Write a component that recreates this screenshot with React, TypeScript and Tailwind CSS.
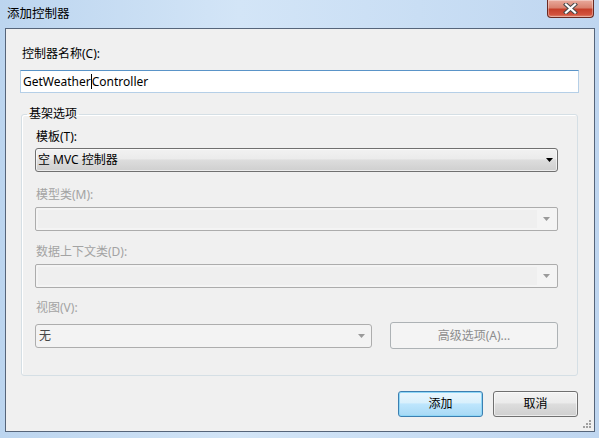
import React from "react";

const font = "font-['Noto_Sans','Noto_Sans_CJK_SC',sans-serif]";

const Arrow: React.FC<{ color: string }> = ({ color }) => (
  <svg width="7" height="4" viewBox="0 0 7 4">
    <path d="M0 0H7L3.5 4Z" fill={color} />
  </svg>
);

const CloseButton: React.FC = () => (
  <div className="w-[47px] h-[18px] rounded-b-[4px] border border-t-0 border-[#6a2a22] bg-[linear-gradient(to_bottom,#e9aa9c_0%,#d9826f_45%,#c6402a_55%,#d2513c_85%,#e08a72_100%)] flex items-center justify-center shadow-[inset_0_0_0_1px_rgba(255,255,255,0.35)]">
    <svg width="15" height="11" viewBox="0 0 15 11">
      <path d="M3 1.5L12 9.5M12 1.5L3 9.5" stroke="#4a4a4a" strokeWidth="4.2" strokeLinecap="square" />
      <path d="M3 1.5L12 9.5M12 1.5L3 9.5" stroke="#ffffff" strokeWidth="2.2" strokeLinecap="square" />
    </svg>
  </div>
);

const DisabledCombo: React.FC = () => (
  <div className="h-[24px] rounded-[2px] border border-[#acacac] bg-[#f4f4f4] flex p-[2px]">
    <div className="flex-1 bg-[#efefef]" />
    <div className="w-[18px] flex items-center justify-center">
      <Arrow color="#9a9a9a" />
    </div>
  </div>
);

export default function App() {
  return (
    <div
      className={`w-[599px] h-[438px] overflow-hidden flex flex-col bg-[linear-gradient(to_right,#bcd5ef,#d3e5f7_40%,#c9def4_70%,#bfd6f0)] text-[12px] leading-[16px] text-black ${font}`}
    >
      <div className="h-[28px] flex items-start justify-between shrink-0">
        <span className="pl-[7px] pt-[6px] text-[12.5px] leading-[16px] text-black">添加控制器</span>
        <div className="mr-[5px]">
          <CloseButton />
        </div>
      </div>

      <div className="relative ml-[5px] w-[590px] h-[404px] border border-[#56657a] bg-[#f0f0f0] flex flex-col pl-[14px] pr-[15px]">
        <label className="pt-[17px] pl-[2px] leading-[16px]">控制器名称(C):</label>
        <div className="mt-[8px] h-[23px] border border-[#5a94c8] border-l-[#b5cfe7] border-r-[#b5cfe7] border-b-[#b5cfe7] bg-white flex items-center pl-[2px]">
          <span>GetWeather</span>
          <span className="inline-block w-px h-[15px] bg-black" />
          <span>Controller</span>
        </div>

        <fieldset className="mt-[13px] ml-[1px] mr-[1px] h-[270px] border border-[#d5dfe5] rounded-[3px] shadow-[inset_1px_1px_0_#ffffff] pl-[13px] pr-[19px] flex flex-col">
          <legend className="-ml-[8px] px-[2px] leading-[16px]">基架选项</legend>

          <label className="pt-[7px] pl-[1px]">模板(T):</label>
          <div className="mt-[3px] h-[24px] rounded-[3px] border border-[#707070] bg-[linear-gradient(to_bottom,#f2f2f2_0%,#ebebeb_45%,#dddddd_50%,#cfcfcf_100%)] flex items-center justify-between pl-[2px] pr-[4px] shadow-[inset_0_0_0_1px_rgba(255,255,255,0.6)]">
            <span>空 MVC 控制器</span>
            <Arrow color="#000000" />
          </div>

          <label className="mt-[15px] pl-[1px] text-[#a3a3a3]">模型类(M):</label>
          <div className="mt-[4px]">
            <DisabledCombo />
          </div>

          <label className="mt-[13px] pl-[1px] text-[#a3a3a3]">数据上下文类(D):</label>
          <div className="mt-[4px]">
            <DisabledCombo />
          </div>

          <label className="mt-[12px] pl-[1px] text-[#a3a3a3]">视图(V):</label>
          <div className="mt-[6px] flex items-center">
            <div className="w-[337px] h-[24px] rounded-[3px] border border-[#adadad] bg-[#f3f3f3] flex items-center justify-between pl-[3px] pr-[6px]">
              <span className="text-[#474747]">无</span>
              <Arrow color="#9a9a9a" />
            </div>
            <div className="ml-[18px] flex-1 h-[27px] rounded-[3px] border border-[#adb2b5] bg-[#f4f4f4] flex items-center justify-center text-[#8d8d8d]">
              高级选项(A)...
            </div>
          </div>
        </fieldset>

        <div className="mt-[15px] flex justify-end gap-[10px] pr-[1px]">
          <button className="w-[85px] h-[26px] rounded-[3px] border border-[#3c7fb1] bg-[linear-gradient(to_bottom,#eaf6fd_0%,#d9f0fc_45%,#bee6fd_50%,#a7d9f5_100%)] shadow-[inset_0_0_0_1px_#8fd7f7] flex items-center justify-center">
            添加
          </button>
          <button className="w-[85px] h-[26px] rounded-[3px] border border-[#707070] bg-[linear-gradient(to_bottom,#f2f2f2_0%,#ebebeb_45%,#dddddd_50%,#cfcfcf_100%)] shadow-[inset_0_0_0_1px_rgba(255,255,255,0.6)] flex items-center justify-center">
            取消
          </button>
        </div>

        <svg className="absolute right-[2px] bottom-[2px]" width="9" height="9" viewBox="0 0 9 9">
          <g fill="#a0a0a0">
            <rect x="6" y="0" width="2" height="2" />
            <rect x="3" y="3" width="2" height="2" />
            <rect x="6" y="3" width="2" height="2" />
            <rect x="0" y="6" width="2" height="2" />
            <rect x="3" y="6" width="2" height="2" />
            <rect x="6" y="6" width="2" height="2" />
          </g>
        </svg>
      </div>
    </div>
  );
}
